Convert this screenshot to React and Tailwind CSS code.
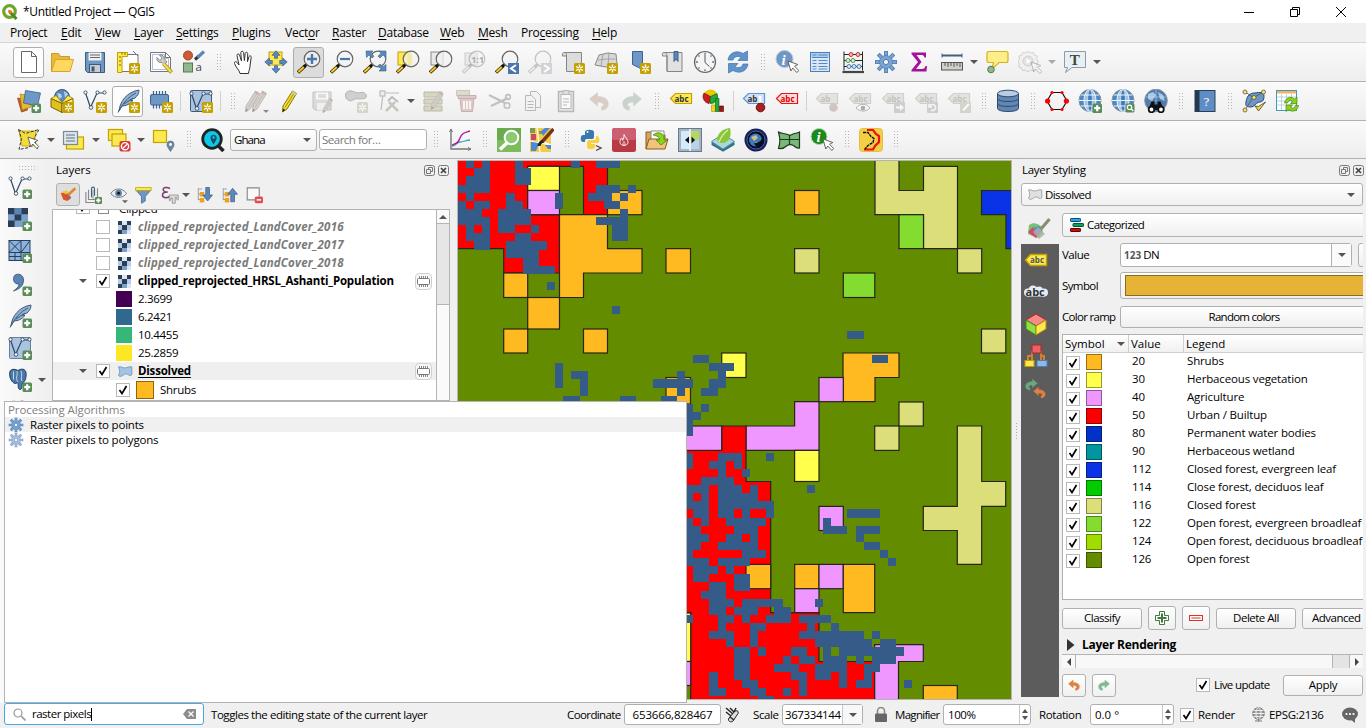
import React from "react";

/* ---------- shared icon pieces ---------- */
const I = ({ children, className = "h-6 w-6" }) => (
  <svg viewBox="0 0 24 24" className={"shrink-0 " + className} fill="none">{children}</svg>
);
const Star = ({ c = "#c4a000" }) => (
  <g>
    <rect x="13" y="13" width="11" height="11" rx="1.500" fill={c} />
    <path d="M18.500 14.500v8M15 16.500l7 4M22 16.500l-7 4" stroke="#fff" strokeWidth="1.400" />
    <circle cx="18.500" cy="18.500" r="1" fill={c} />
  </g>
);
const Plus = () => (
  <g>
    <rect x="14.500" y="14.500" width="9.500" height="9.500" rx="1.500" fill="#5a8c5a" />
    <path d="M19.200 16.200v6M16.200 19.200h6" stroke="#fff" strokeWidth="2.200" />
  </g>
);
const Lens = ({ sign, pale }) => (
  <g opacity={pale ? 0.45 : 1}>
    <path d="M8.500 15.500L1 22.500" stroke={pale ? "#888" : "#3a3000"} strokeWidth="3.400" />
    <path d="M6.800 17L1.400 22.100" stroke={pale ? "#ddd" : "#f6c52c"} strokeWidth="2" />
    <path d="M10.400 13.600L7 16.800" stroke={pale ? "#888" : "#111"} strokeWidth="2.600" />
    <circle cx="15" cy="9" r="7.800" fill="#f3f3f3" fillOpacity=".75" stroke={pale ? "#888" : "#666"} strokeWidth="1.200" />
    {sign}
  </g>
);
const Cursor = ({ x = 12, y = 11 }) => (
  <path transform={`translate(${x} ${y})`} d="M0 0l2.800 10 2-3 4 4.500 2-2-4.300-4.200 3.300-1.800z" fill="#fff" stroke="#555" strokeWidth=".9" />
);
const Abc = ({ fill, stroke, text = "#333", label = "abc", pale, children }) => (
  <I>
    <g opacity={pale ? 0.4 : 1}>
      <path d="M1.500 9.500L6.500 4.500h16v10h-16z" fill={fill} stroke={stroke} strokeWidth="1.200" />
      <text x="5.500" y="12.500" fontSize="8" fontWeight="700" fontFamily="Open Sans, sans-serif" fill={text}>{label}</text>
      {children}
    </g>
  </I>
);
const Quill = ({ dark }) => (
  <g>
    <path d="M3 22C4 12 11 3 23 1c0 4-2 6-4 8l-5 2 3 .5c-3 3.500-7 5.500-11 5.500z" fill="#8db2d8" stroke="#415a75" strokeWidth="1" />
    <path d="M2 23.500C7 14 12 8 20 4M8 15l9-6" stroke={dark ? "#2f465e" : "#415a75"} strokeWidth="1" />
  </g>
);
const Vee = () => (
  <g stroke="#2f4b66" strokeWidth="1.200">
    <path d="M2.500 4l5 14.500L14 4h7" />
    <g fill="#fff" strokeWidth=".9">
      <circle cx="2.500" cy="3.500" r="1.600" /><circle cx="8" cy="18.500" r="1.800" /><circle cx="14.500" cy="3.500" r="1.600" /><circle cx="21.500" cy="3.500" r="1.600" />
    </g>
  </g>
);
const Globe = ({ children }) => (
  <I>
    <circle cx="12" cy="11.500" r="11" fill="#4f88c0" stroke="#8a949e" strokeWidth="1" />
    <ellipse cx="12" cy="11.500" rx="6" ry="11" fill="#9cc4e8" stroke="#eef4fa" strokeWidth="1" />
    <ellipse cx="12" cy="11.500" rx="2.400" ry="11" fill="#3f7cb8" stroke="#eef4fa" strokeWidth=".6" />
    <path d="M1 11.500h22M3 6h18M3 17h18" stroke="#eef4fa" strokeWidth="1" />
    {children}
  </I>
);
const Gear = ({ fill = "#7ba3d0", stroke = "#4d7fb8" }) => (
  <g>
    <g stroke={stroke} strokeWidth="4"><path d="M12 1v22M1 12h22M4.200 4.200l15.600 15.600M19.800 4.200L4.200 19.800" /></g>
    <g stroke={fill} strokeWidth="2.400"><path d="M12 1.800v20.400M1.800 12h20.400M4.800 4.800l14.400 14.400M19.200 4.800L4.800 19.200" /></g>
    <circle cx="12" cy="12" r="6.500" fill={fill} stroke={stroke} strokeWidth=".7" />
    <circle cx="12" cy="12" r="2.600" fill="#f4f4f4" stroke={stroke} />
  </g>
);
const Pencil = ({ pale, dx = 0 }) => (
  <g transform={`translate(${dx} 0)`}>
    <path d="M5 17L14.500 2l4 2.500L9 20l-4.500 3z" fill={pale ? "#d5d1cb" : "#f0dc3c"} stroke={pale ? "#bdb9b4" : "#8a7600"} strokeWidth="1" />
    <path d="M7 18.500l9.500-15" stroke={pale ? "#c0bbb5" : "#a89000"} strokeWidth="1" />
    <path d="M14.500 2l4 2.500-1 1.700-4-2.600z" fill={pale ? "#cfaeae" : "#c9c9c9"} />
    <path d="M5.200 19.500L4.500 23l2.800-2z" fill={pale ? "#999" : "#222"} />
  </g>
);
const Undo = ({ c, flip }) => (
  <path transform={flip ? "translate(24 0) scale(-1 1)" : undefined} d="M2.500 10l8-6.500v4c8 0 12 4 10.500 9-1 3-3 4.500-6.500 4.500v-3.500c3.500 0 3-4.500-4-4.500v4z" fill={c} stroke={c} strokeWidth=".6" />
);
const Poly = ({ fill, stroke }) => (
  <path d="M2 3c4-1.500 6 2 10 1.500S18 2 22.500 3v12c-2.500 2.500-4 .5-6.500-.5s-4-1-6.500 1-5.500 3-7.500.5c2.500-4 2.500-8 0-13z" fill={fill} stroke={stroke} strokeWidth="1.300" />
);
const Cells = () => (
  <g>
    <rect width="20" height="19" y="1" x="0" fill="#7ba0cc" />
    <path d="M0 1h6.600v6.300H0zM13.300 1h6.700v6.300h-6.700zM6.600 7.300h6.700v6.300H6.600zM0 13.600h6.600V20H0z" fill="#2b3e55" />
    <path d="M6.600 1h6.700v6.300H6.600z" fill="#5b83b4" />
  </g>
);

const icons = {
  newp: <I><path d="M4.500 1.500h10l5 5v16h-15z" fill="#fff" stroke="#666" /><path d="M14.500 1.500v5h5" stroke="#666" /></I>,
  open: <I><path d="M1.500 21.500v-18h7l2 3h9v4" fill="#e8b93a" stroke="#c99b2a" /><path d="M1.500 21.500l4-12h18l-3.500 12z" fill="#ffd75e" stroke="#d5a62f" /></I>,
  save: <I><path d="M2.500 2.500h19v20h-17l-2-2z" fill="#6d97c4" stroke="#415a75" /><rect x="5.500" y="2.500" width="13" height="8" fill="#f0f0f0" /><path d="M7 5h10M7 7.500h10" stroke="#666" /><rect x="6.500" y="14.500" width="11" height="8" fill="#c8ccd0" stroke="#415a75" /><rect x="8.500" y="16.500" width="3" height="5" fill="#415a75" /></I>,
  layout: <I><path d="M5 4.500h17v17H5z" fill="#fff" stroke="#777" /><path d="M1.500 22.500V2.500h10v4h-5.500v16z" fill="#fce94f" stroke="#c4a000" /><path d="M6 2.500v2M3 7h2M3 11h2M3 15h2M9 3v2" stroke="#7a6500" /><path d="M17 1l5 5" stroke="#777" /><Star /></I>,
  mgr: <I><path d="M1.500 2.500h15l5 5v14h-20z" fill="#fff" stroke="#777" /><path d="M16.500 2.500v5h5" stroke="#777" /><path d="M3.500 4.500h12v4h4v11h-16z" stroke="#a9c0e6" /><path d="M8 7.500a4 4 0 0 0 5 5l2 2 3-2.500-2.500-3a4 4 0 0 0-5-4l2.500 3-2 2.500z" fill="#ccc" stroke="#777" strokeWidth=".8" /><path d="M14.500 13.500l8 9" stroke="#b39600" strokeWidth="4" /><path d="M14.500 13.500l7.500 8.500" stroke="#f6dc6c" strokeWidth="2" /></I>,
  style: <I><circle cx="6" cy="5.500" r="4.500" fill="#cc5c35" stroke="#a84020" /><path d="M13 9.500l4-3.500" stroke="#333" strokeWidth="3" /><path d="M15.500 7.500l6.500-6" stroke="#5b87bd" strokeWidth="3.200" /><rect x="1.500" y="13" width="9" height="9" fill="#8fb88f" stroke="#527a52" /><text x="13.500" y="20.500" fontSize="11.500" fontFamily="Open Sans, sans-serif" fill="#444">a</text></I>,
  hand: <I><path d="M9 23.500C8.500 20 5 18 3.500 13.500c-.5-2 1.500-2.500 3-.5L8 15 6 5.500C6 3.500 8 3.500 8.500 5L10.500 11 9.800 2.500c.3-1.700 2.400-1.600 2.800 0l.8 8L14.200 3.200c.6-1.500 2.400-1.200 2.500.4l-.2 8 1.500-5c.8-1.400 2.400-.8 2.200.8L19 16c0 3-1.500 5-1.500 7.500z" fill="#fff" stroke="#333" strokeWidth="1" /></I>,
  panmap: <I><rect x="5" y="2" width="13" height="13" fill="#fce94f" stroke="#c4a000" /><g fill="#5b87bd" stroke="#3c618c" strokeWidth=".7"><path d="M12 .8l4 4.500h-2.500v3h-3v-3H8zM12 23.200l4-4.500h-2.500v-3h-3v3H8zM.8 12l4.500-4v2.500h3v3h-3V16zM23.200 12l-4.500-4v2.500h-3v3h3V16z" /></g></I>,
  zin: <I><Lens sign={<path d="M15 4v10M10 9h10" stroke="#4a76ad" strokeWidth="2.400" />} /></I>,
  zout: <I><Lens sign={<path d="M10 9h10" stroke="#4a76ad" strokeWidth="2.200" />} /></I>,
  zfull: <I><Lens /><g fill="#5b87bd" stroke="#3c618c" strokeWidth=".6"><path d="M3 1h7L8 3.200l3 3L9 8 6 5 3.500 7.500zM23 1h-7l2 2.200-3 3L17 8l3-3 3 2.500zM23 21h-7l2-2.200-3-3 2-1.800 3 3 3-2.500z" /></g></I>,
  zsel: <I><rect x="2" y="2" width="12" height="13" fill="#fce94f" stroke="#c4a000" /><Lens /><path d="M12 3.500h4v11c-3 0-5-2-5-5z" fill="#f5ea86" opacity=".7" /></I>,
  zlay: <I><rect x="2" y="2" width="12" height="13" fill="#e9e9e9" stroke="#8a8a8a" /><Lens /></I>,
  z11: <I><rect x="3" y="3" width="12" height="12" fill="#e9e9e9" stroke="#ccc" /><Lens pale /><text x="9.200" y="12.500" fontSize="9" fontWeight="700" fontFamily="Open Sans, sans-serif" fill="#aaa">1:1</text></I>,
  zprev: <I><Lens /><rect x="13" y="13" width="11" height="11" fill="#4a76ad" /><path d="M21 15l-5 3.500 5 3.500" stroke="#fff" strokeWidth="2" /></I>,
  znext: <I><Lens pale /><rect x="13" y="13" width="11" height="11" fill="#d0d4d8" /><path d="M16 15l5 3.500-5 3.500" stroke="#fff" strokeWidth="2" /></I>,
  map2: <I><path d="M3.500 2.500h17v19H5.500V6H1.500C1 3 2 2.500 3.500 2.500z" fill="#dcdcdc" stroke="#858585" /><path d="M3.500 2.500c1.500 0 2 1 2 3.500" stroke="#858585" /><Star /></I>,
  map3: <I><path d="M1 15L5 5l9-2 8 1 1 10-11 3z" fill="#d8d8d8" stroke="#8a8a8a" /><path d="M3.500 10l9-1 9 0M9 4l-2 12M15 3l-1 13" stroke="#999" strokeWidth=".8" /><Star /></I>,
  bmk: <I><path d="M5.500 1.500h10v18l-4-2-6-3z" fill="#6d97c4" stroke="#41618a" /><Star /></I>,
  bmks: <I><path d="M4 2.500h18v19H7V6H2.500C2 3 2.500 2.500 4 2.500z" fill="#e2e2e2" stroke="#858585" /><path d="M4 2.500c2 0 3 1 3 3.500v15" stroke="#858585" /><path d="M14 1.500h4v10l-2-2.500-2 2.500z" fill="#5b87bd" stroke="#3c618c" /></I>,
  clock: <I><circle cx="12" cy="12" r="10.500" fill="#f4f4f4" stroke="#666" strokeWidth="1.200" /><path d="M12 5v7.500l4.500 4" stroke="#555" /><path d="M12 2.800v2M12 19.200v2M2.800 12h2M19.200 12h2M5.500 5.500l1 1M18.500 5.500l-1 1M5.500 18.500l1-1M18.500 18.500l-1-1" stroke="#4a6f9a" strokeWidth="1.300" /></I>,
  refresh: <I><path d="M2 10C3 3 10-.5 17 3.500L21.500 1v9.500H12l3-3.200c-4-2-7-.5-8 2.700z" fill="#5f93cc" stroke="#3f72ad" strokeWidth=".7" /><path d="M22 14c-1 7-8 10.500-15 6.500L2.500 23v-9.500H12l-3 3.200c4 2 7 .5 8-2.700z" fill="#5f93cc" stroke="#3f72ad" strokeWidth=".7" /></I>,
  ident: <I><circle cx="9.500" cy="9" r="8.500" fill="#6d97c4" stroke="#b5c8dd" /><text x="6.500" y="14.500" fontSize="15" fontStyle="italic" fontWeight="700" fontFamily="Liberation Serif, serif" fill="#fff">i</text><Cursor x={13} y={11} /></I>,
  table: <I><rect x="2.500" y="2.500" width="19" height="19" fill="#d9e8f7" stroke="#4b7fb8" /><rect x="3" y="3" width="18" height="4" fill="#a9cdf0" /><path d="M4 7.500h16M4.500 5h4M10.500 5h9" stroke="#5b87bd" /><path d="M4.500 10.500h4M10.500 10.500h9M4.500 13.500h4M10.500 13.500h9M4.500 16.500h4M10.500 16.500h9M4.500 19h4M10.500 19h9" stroke="#5b87bd" strokeWidth="1.200" /></I>,
  abacus: <I><path d="M3 1.500v19M21.500 1.500v19M3 4.500h18.500M3 10.500h18.500M3 16.500h18.500" stroke="#222" /><path d="M1.500 22h21.500" stroke="#444" strokeWidth="2.200" /><g fill="#ffb5b5" stroke="#b33"><circle cx="10" cy="4.500" r="2" /><circle cx="17" cy="4.500" r="2" /></g><g fill="#d5f5d5" stroke="#5a8c5a"><circle cx="7" cy="10.500" r="2" /><circle cx="12" cy="10.500" r="2" /></g><g fill="#d5e5f5" stroke="#4b7fb8"><circle cx="8" cy="16.500" r="2" /><circle cx="13" cy="16.500" r="2" /><circle cx="18" cy="16.500" r="2" /></g></I>,
  gear: <I><Gear /></I>,
  sigma: <I><path d="M4.500 2.500h14.500v5h-1.500c-.5-2-1.500-2.500-3.500-2.500H9.500l5 7-5.500 7h6c2 0 3-1 3.500-3H20l-.5 5.500H4.500V20L11 12 4.500 4z" fill="#a3119d" /></I>,
  ruler: <I><path d="M2 5.500h20" stroke="#3f5f80" strokeWidth="2" /><path d="M2 3.500v4M22 3.500v4" stroke="#3f5f80" /><rect x="1.500" y="12.500" width="21" height="7.500" fill="#d0d0cc" stroke="#555" /><path d="M5 13v3M8 13v4M11 13v3M14 13v4M17 13v3M20 13v4" stroke="#555" /></I>,
  tip: <I><path d="M4 1.500h17q2 0 2 2v7q0 2-2 2h-7L7 19l1.500-6.500H4q-2 0-2-2v-7q0-2 2-2z" fill="#fdee8c" stroke="#d5b21a" strokeWidth="1.200" /><circle cx="6" cy="19.500" r="3.300" fill="#8fb88f" stroke="#527a52" /></I>,
  action: <I><g opacity=".4" stroke="#999"><path d="M10 1.500l2.500 1.500 3-.5 1 2.700 2.700 1-.5 3 1.500 2.300-1.500 2.500.5 3-2.700 1-1 2.700-3-.5-2.500 1.500-2.500-1.500-3 .5-1-2.700-2.700-1 .5-3L0 11.500l1.500-2.300-.5-3 2.700-1 1-2.700 3 .5z" fill="#ececec" /><circle cx="10" cy="11" r="5" fill="#ccc" /></g><path d="M8.500 8.500l4.500 2.700-4.500 2.700z" fill="#fff" /><g opacity=".4"><Cursor x={13} y={12} /></g></I>,
  textn: <I><path d="M1.500 1.500h21v16H9L2.500 22.500l2-5h-3z" fill="#e9f0f5" stroke="#8c9ba6" /><text x="6.800" y="14.500" fontSize="15" fontWeight="700" fontFamily="Liberation Serif, serif" fill="#444">T</text></I>,
  dsm: <I><path d="M.5 9l9 2 1 10-6 2z" fill="#c95a2a" stroke="#8c3b16" strokeWidth=".7" /><path d="M3 5l11 2v11l-9 3z" fill="#e9b92c" stroke="#a88112" strokeWidth=".7" /><path d="M8.500 1.500L23.500 4l-3 13L6.500 14z" fill="#6d97c4" stroke="#3c618c" strokeWidth=".8" /><Plus /></I>,
  geopkg: <I><circle cx="12" cy="8" r="7.500" fill="#5b87bd" stroke="#30557f" /><path d="M7 4l4 1 1 3-3 2zM14 2l4 3-3 4z" fill="#b8d2ea" /><path d="M1 9.500l5-3 6 7 6-7 5 3-11 5z" fill="#fce94f" stroke="#8a7000" strokeWidth=".7" /><path d="M1 9.500l11 5v9L1 18z" fill="#e0c21c" stroke="#6b5600" strokeWidth=".9" /><path d="M23 9.500l-11 5v9L23 18z" fill="#fff176" stroke="#6b5600" strokeWidth=".9" /><Star /></I>,
  vnew: <I><Vee /><Star /></I>,
  quill: <I><Quill /><Star /></I>,
  chip: <I><path d="M4.500 2v17.500M7.500 2v17.500M10.500 2v17.500M13.500 2v17.500M16.500 2v17.500" stroke="#3c618c" strokeWidth="1.200" /><rect x="1.500" y="5.500" width="18" height="10.500" rx="1.500" fill="#6d97c4" stroke="#3c618c" /><Star /></I>,
  virt: <I><rect x="1.500" y="1.500" width="21" height="21" rx="1" fill="#a9c3e0" stroke="#415a75" /><g transform="translate(0 1)"><Vee /></g><Star /></I>,
  pen2: <I><Pencil pale dx={-4} /><Pencil pale dx={3} /><path d="M18 21h6l-3 3z" fill="#888" /></I>,
  pen: <I><Pencil /></I>,
  psave: <I><g opacity=".55"><path d="M2 3h18v18H4l-2-2z" fill="#c8c8c8" stroke="#999" /><rect x="5" y="3.500" width="12" height="7" fill="#fafafa" /><path d="M7 6h8M7 8h8" stroke="#999" /><rect x="6" y="14" width="9" height="7" fill="#eee" /></g><g transform="translate(9 8) scale(.68)"><Pencil pale /></g></I>,
  padd: <I><path d="M1.500 6c0-4 5-5 8-3.500S15 4 18 3.500s5.500 3 4 5-9 1-11 1.500-3 3-6 1.500-3.500-2.500-3.500-5.500z" fill="#cfd0cc" stroke="#b5b6b2" /><g opacity=".8"><Star c="#cfcdc2" /></g></I>,
  vert: <I><g stroke="#bbb" strokeWidth="1.200"><path d="M4 21L6 5M9 4h13" /><rect x="3" y="2" width="5" height="5" fill="#eee" /><path d="M9 22l9-9M12 13l9 9" strokeWidth="2.500" stroke="#c8c5be" /><path d="M11 12l4-4 6 5" strokeWidth="2" /></g></I>,
  multi: <I><g fill="#d8d6c2" stroke="#bbb9a8"><path d="M2 3h18v5H2zM2 10h18v5H2zM2 17h18v5H2z" /></g><g transform="translate(2 1) scale(.85)"><Pencil pale dx={4} /></g></I>,
  trash: <I><path d="M1.500 1.500h13v5h-13z" fill="#dddbd0" stroke="#c9c7bb" /><path d="M3 6.500h18v3H3zM5 9.500h14l-1.500 13h-11z" fill="#dfcaca" stroke="#c5b0b0" /><path d="M9 12v8M12 12v8M15 12v8" stroke="#fff" strokeWidth="1.500" /></I>,
  cut: <I><g stroke="#c0c0c0"><path d="M1 6l16 8M3 17L20 9" strokeWidth="2.200" /><circle cx="19" cy="16.500" r="2.800" strokeWidth="1.600" /><circle cx="20" cy="8" r="2.400" strokeWidth="1.600" /></g></I>,
  copy: <I><g fill="#f2f2f2" stroke="#b8b8b8"><path d="M9.500 2.500h6l4 4v12h-10z" /><path d="M4.500 6.500h6l4 4v11h-10z" /><path d="M6.500 12.500h6M6.500 15.500h6M6.500 18.500h6" /></g></I>,
  paste: <I><g stroke="#b8b8b8"><rect x="4.500" y="2.500" width="15" height="20" fill="#e4e4e4" strokeWidth="1.500" /><rect x="7" y="5.500" width="10" height="14" fill="#fafafa" /><path d="M9 1.500h6v4H9z" fill="#ddd" /><path d="M9 10h6M9 13h6M9 16h4" /></g></I>,
  undo: <I><Undo c="#d9cdc6" /></I>,
  redo: <I><Undo c="#c9d2cb" flip /></I>,
  abcY: <Abc fill="#fce94f" stroke="#c4a000" />,
  diag: <I><circle cx="8.500" cy="7.500" r="7" fill="#e6c700" /><path d="M8.500 7.500L2 4a7 7 0 0 0 5 10.500z" fill="#c81e1e" stroke="#700" strokeWidth=".6" /><path d="M8.500 7.500l6.500-3a7 7 0 0 1-7 10z" fill="#23a83a" stroke="#0a5a18" strokeWidth=".6" /><path d="M9.500 16h4v6.500h-4z" fill="#f2d60c" stroke="#a89000" strokeWidth=".6" /><path d="M13.500 9.500h3.500v13h-3.500z" fill="#23a83a" stroke="#0a5a18" strokeWidth=".6" /><path d="M17.500 17h4v5.500h-4z" fill="#a01515" stroke="#500" strokeWidth=".6" /></I>,
  abcB: <Abc fill="#cfe2f8" stroke="#5b95d8" label="ab"><path d="M18 14V7" stroke="#fff" strokeWidth="2.500" /><circle cx="18.500" cy="18.500" r="4.300" fill="#a52020" stroke="#7c1010" /></Abc>,
  abcR: <Abc fill="#fdd" stroke="#e11" text="#d00" />,
  g1: <Abc pale fill="#ccc9b8" stroke="#999" text="#777" label="ab"><circle cx="18.500" cy="18.500" r="4.300" fill="#a08080" /></Abc>,
  g2: <Abc pale fill="#ccc9b8" stroke="#999" text="#777"><path d="M8 19c4-5 10-5 14 0-4 4-10 4-14 0z" fill="#fff" stroke="#555" /><circle cx="15" cy="19" r="2.300" fill="#444" /></Abc>,
  g3: <Abc pale fill="#ccc9b8" stroke="#999" text="#777"><rect x="13" y="13" width="11" height="11" rx="1" fill="#999" /><path d="M15 17.500h4V15l4 3.500-4 3.500v-2.500h-4z" fill="#fff" /></Abc>,
  g4: <Abc pale fill="#ccc9b8" stroke="#999" text="#777"><rect x="13" y="13" width="11" height="11" rx="1" fill="#999" /><path d="M16 17a3 3 0 1 1 1 4M15 15v3h3" stroke="#fff" strokeWidth="1.500" /></Abc>,
  g5: <Abc pale fill="#ccc9b8" stroke="#999" text="#777"><rect x="13" y="13" width="11" height="11" rx="1" fill="#a8a694" /><path d="M16 21.500l6-6.500" stroke="#fff" strokeWidth="2.200" /></Abc>,
  db: <I><path d="M1.500 4.500v15c0 4 21 4 21 0v-15" fill="#6286b4" stroke="#2f4b6c" /><path d="M1.500 9.500c0 4 21 4 21 0M1.500 14.500c0 4 21 4 21 0" stroke="#2f4b6c" /><ellipse cx="12" cy="4.500" rx="10.500" ry="3.300" fill="#b9cde4" stroke="#2f4b6c" /></I>,
  hex: <I><path d="M2 12L7 3.500h10L22 12l-5 8.500H7z" stroke="#111" strokeWidth="1.200" /><g fill="#f00"><circle cx="2.600" cy="12" r="2.600" /><circle cx="21.400" cy="12" r="2.600" /><circle cx="7" cy="3.500" r="1.600" /><circle cx="17" cy="3.500" r="1.600" /><circle cx="7" cy="20.500" r="1.600" /><circle cx="17" cy="20.500" r="1.600" /></g></I>,
  gl1: <Globe><Plus /></Globe>,
  gl2: <Globe><rect x="14.500" y="14.500" width="9" height="9" rx="1.500" fill="#5a8c5a" /><circle cx="18.500" cy="18.300" r="2.200" stroke="#fff" strokeWidth="1.200" /><path d="M20.300 20l2 2" stroke="#fff" strokeWidth="1.300" /></Globe>,
  gl3: <I><circle cx="12" cy="11.500" r="11.300" fill="#4f7cb0" stroke="#8a949e" /><path d="M4 5l5-2 3 3-4 6-4-2zM14 3l5 3 2 6-5-2z" fill="#a9c8e6" /><path d="M2 8h20M12 1v12" stroke="#dfeaf5" strokeWidth=".5" /><path d="M4.500 20l3-7.500h3v3h3v-3h3l3 7.500-4 1h-7z" fill="#111" /><circle cx="7.500" cy="20.500" r="2.800" fill="#fff" stroke="#111" strokeWidth="1.800" /><circle cx="17" cy="20.500" r="2.800" fill="#fff" stroke="#111" strokeWidth="1.800" /></I>,
  help: <I><rect x="2" y="1.500" width="20" height="21" fill="#5f8cc4" stroke="#2b3e55" /><rect x="2" y="1.500" width="4.500" height="21" fill="#26384d" /><text x="10.500" y="17" fontSize="13" fontFamily="Liberation Serif, serif" fill="#fff">?</text></I>,
  topo: <I><path d="M4 13c1-7 4-9 9-9 5-1 9-1 9 3 0 5-2 6-5 6-4 1-4 5-8 5s-6-1-5-5z" fill="#6d97c4" stroke="#2f4b6c" /><path d="M2.500 2.500l9 6 11-6M11 8.500L3 21" stroke="#555" strokeWidth=".8" /><g fill="#fce94f" stroke="#555" strokeWidth=".8"><circle cx="3" cy="3" r="2" /><circle cx="21.500" cy="3" r="2" /><circle cx="12" cy="8.500" r="2" /><circle cx="3" cy="21" r="2" /></g><path d="M13 17l3.500 5L23.500 13l-7 4.500z" fill="#f6d42c" stroke="#444" strokeWidth=".8" /></I>,
  sheet: <I><rect x="1.500" y="1.500" width="20" height="20" fill="#fff" stroke="#3b9cc0" /><rect x="2" y="2" width="19" height="2.500" fill="#f6b25c" /><path d="M2 8h19M2 12h19M2 16h19M6.500 5v16M11.500 5v16M16.500 5v16" stroke="#a9c8d8" strokeWidth=".8" /><path d="M9.500 14c1-6 7-7 10-4l2.500-2v6.500h-6.500l2-2c-2-2-4-1-5 1.500zM23.500 16.500c-1 6-7 7-10 4l-2.500 2V16h6.500l-2 2c2 2 4 1 5-1.500z" fill="#8ad120" stroke="#4a8a08" strokeWidth=".7" /></I>,
  sel1: <I><path d="M2 3h17l-2 15H5z" fill="#f2dc3c" stroke="#c4a000" strokeWidth=".8" /><path d="M1.500 1.500l7 4 13.500-4-5 9 4 12M1.500 1.500l3 9-2.500 11 10-2 2-3" stroke="#333" strokeDasharray="3 1.500" /><Cursor x={11} y={9} /></I>,
  sel2: <I><rect x="4.500" y="9" width="17" height="12" fill="#fce94f" stroke="#c4a000" strokeWidth="1.200" /><rect x="1.500" y="3.500" width="14" height="13" fill="#dde5ee" stroke="#7c8894" strokeWidth="1.200" /><path d="M4 7h9M4 10h9M4 13h9" stroke="#8a97a5" strokeWidth="1.400" /></I>,
  sel3: <I><rect x="1.500" y="1.500" width="14" height="11" fill="#fce94f" stroke="#c4a000" strokeWidth="1.200" /><rect x="5" y="6" width="14" height="12" fill="#fce94f" stroke="#c4a000" strokeWidth="1.200" /><rect x="12.500" y="13" width="11" height="10.500" rx="2" fill="#d83a3a" /><circle cx="18" cy="18.200" r="3.600" stroke="#fff" strokeWidth="1.400" /><path d="M15.500 20.800l5-5" stroke="#fff" strokeWidth="1.300" /></I>,
  sel4: <I><rect x="1.500" y="2.500" width="13" height="12" fill="#fce94f" stroke="#c4a000" strokeWidth="1.200" /><path d="M18.500 23.500c-3-4.500-3.500-5-3.500-7a3.500 3.500 0 0 1 7 0c0 2-.5 2.500-3.500 7z" fill="#6a89a5" stroke="#4a6a86" strokeWidth=".6" /><circle cx="18.500" cy="16.500" r="1.400" fill="#fff" /></I>,
  find: <I><path d="M17.500 18l5 5" stroke="#222" strokeWidth="3.600" /><circle cx="11" cy="11" r="9.300" fill="#0fc8e8" stroke="#222" strokeWidth="2.800" /><path d="M12.500 16.500c-2.600-4.500-3-5.500-3-7a3.200 3.200 0 0 1 6.300 0c0 2-.8 3-3.300 7z" fill="#14506c" /><circle cx="12.600" cy="9.500" r="1.200" fill="#0fc8e8" /></I>,
  plot: <I><path d="M3 1v20h20" stroke="#777" strokeWidth="1.400" /><path d="M1.500 4L3 1l1.500 3M20 19.500l3 1.500-3 1.500" stroke="#777" /><path d="M4 18c5 0 4-4 8-4s6-2 10-2" stroke="#3aa5b5" strokeWidth="1.300" /><path d="M4 17c5-2 6-2 8-7s4-5 10-7" stroke="#b0189a" strokeWidth="1.400" /></I>,
  greenS: <I><rect width="24" height="24" fill="#7cbc5e" /><rect width="24" height="12" fill="#6bab50" /><path d="M11 14l-8 7.500" stroke="#fff" strokeWidth="3.500" /><circle cx="14.500" cy="9.500" r="6.800" fill="#8dc873" stroke="#fff" strokeWidth="2" /></I>,
  osm: <I><rect x="0" y="0" width="21" height="24" fill="#f4cc4a" /><path d="M0 0h5v5H0zM9 3h4v3H9z" fill="#7a9a5a" /><path d="M1 6h5v6H1z" fill="#c84a6a" /><path d="M11 3l4-3h5l-7 8zM1 14c4-2 6 0 8 2l-3 7H1z" fill="#4a88d8" /><path d="M0 13l21 4M7 0l3 24M14 14l7 3" stroke="#fff" strokeWidth="1.200" /><path d="M12 14L23.500 1" stroke="#7a3414" strokeWidth="3.500" /><path d="M9 18c0-3 2-4 4-5" stroke="#222" strokeWidth="3" /><path d="M15 17h6v4h-3z" fill="#4a88d8" /></I>,
  py: <I><path d="M6 7V4c0-3 9-3 9 0v5c0 2-1 2-3 2H8c-2 0-2 1-2 3H4c-3 0-3-7 0-7h7z" fill="#3b78ab" /><path d="M17 8h1c3 0 3 7 1 7h-7v1h4v3c0 3-8 3-8 0v-4c0-2 1-3 3-3h4c2 0 2-1 2-4z" fill="#f8d13d" /><circle cx="8.500" cy="4" r="1" fill="#fff" /><path d="M17 17.500l5 2.500-5 2.500" stroke="#444" strokeWidth="1.300" /></I>,
  fire: <I><rect width="24" height="24" rx="2.500" fill="#b83a44" /><rect width="24" height="12" rx="2.500" fill="#cd6070" /><path d="M12 6.500c.5 2.500 4.500 5 4 8-.7 4-7.300 4-8 0-.4-2 1-3.500 1.500-4.500 1 1 1 1.500 1 2.500 1-1.500 1.500-3.500 1.500-6z" stroke="#fff" strokeWidth=".9" /><path d="M12 17.500c-2-1.500-.5-3 0-4 .8 1 2 2.500 0 4z" stroke="#fff" strokeWidth=".8" /></I>,
  folder: <I><path d="M1 21V4h7l2 3h10v3" fill="#d9a35c" stroke="#8a5a1c" /><path d="M6 3h13v9H6z" fill="#fff" stroke="#888" /><path d="M1 21L4 11h19l-3 10z" fill="#f0c47a" stroke="#8a5a1c" /><path d="M8 7c6-5 12-1 11 5h3.500L16 17l-5-5h3.500c0-3-2-4-6.500-5z" fill="#8ad120" stroke="#4a8a08" strokeWidth=".8" /></I>,
  swipe: <I><rect x=".5" y=".5" width="23" height="23" fill="#a5b5c5" stroke="#6a7a8a" /><rect x="3" y="3" width="8.500" height="18" fill="#d5ebfb" /><rect x="12.500" y="3" width="8.500" height="9" fill="#b5d860" /><rect x="12.500" y="12" width="8.500" height="9" fill="#b9d4ea" /><path d="M12 1v22" stroke="#fff" strokeWidth="1.500" /><path d="M11 8.500v7L7 12zM13.500 8.500v7l3.500-3.500z" fill="#111" /></I>,
  leaf: <I><path d="M.5 14.500L12 7l11.500 7.500V17L12 23.800.5 17z" fill="#39708a" /><path d="M.5 13.500L12 6l11.500 7.500L12 21z" fill="#a9d8d8" stroke="#4b93a8" /><path d="M6 11C7 5 11 1 19 0c2 8-1 15-8 15-3 0-4.500-1-5-4z" fill="#8bc63a" /><path d="M8 14C10 9 13 5 17 2" stroke="#d8f0b0" strokeWidth="1.200" /></I>,
  earth: <I><circle cx="12" cy="12" r="11.500" fill="#17205a" /><circle cx="12" cy="12" r="9" fill="#060c20" stroke="#4a5fa8" strokeWidth="1" /><circle cx="11.500" cy="12" r="6.500" fill="#3c7ab8" /><path d="M7 9l5-2 2 3-4 3zM11 14l4 0-2 4z" fill="#c9c08a" /><path d="M12 18.500c5 0 7-4 6-9 0 4-5 5-8 6z" fill="#081028" /></I>,
  gpoly: <I><path d="M1.500 4c3 2 6 1 9 2.500 2 1 3 1 4.500 0 3-1.500 5-1 7.500-2.500v16c-3 1-4-1-6-2.500-2-1-5-1-7 .5-2 2-5 3-8 2.500 2-6 2-10 0-16z" fill="#7ab87a" stroke="#1d3a1d" strokeWidth="1.200" /><path d="M3 11.500h19.500M12.500 7v10" stroke="#1d3a1d" strokeWidth="1.200" /></I>,
  gi: <I><circle cx="9" cy="8.500" r="8" fill="#1a8a1a" stroke="#b5d8b5" /><text x="6.500" y="14" fontSize="15" fontStyle="italic" fontWeight="700" fontFamily="Liberation Serif, serif" fill="#fff">i</text><Cursor x={13} y={11} /></I>,
  route: <I><rect x=".5" y=".5" width="23" height="23" rx="3" fill="#f2cf45" stroke="#e5c040" /><path d="M8 2h6l3 4 3 2v6l-4 4-2 3.500H5" stroke="#f01010" strokeWidth="2.200" /><path d="M4 4.500h5l3 4 3 2-1 4-5 3-3 3.500" stroke="#111" strokeDasharray="3 .7" strokeWidth="1.400" /></I>,
  lraster: <I><Cells /><Plus /></I>,
  lmesh: <I><rect x="1" y="1.500" width="21" height="20" fill="#8db2dc" stroke="#26405e" /><path d="M1 1.500l12 12 9-12M13 1.500L1 13.500M13 1.500v20M1 13.500h21M7 13.500v8M1 17.500h12" stroke="#26405e" /><Plus /></I>,
  lcomma: <I><path d="M5.500 6.500c0-6 10-6 10 1.500 0 6-4 9-10 11 4-3 5.500-5 5.500-7-4 0-5.500-2-5.500-5.500z" fill="#5b83b4" stroke="#2f4b6c" strokeWidth=".8" /><Plus /></I>,
  lquill: <I><Quill /><Plus /></I>,
  lvirt: <I><rect x="1.500" y="1.500" width="21" height="21" rx="1" fill="#a9c3e0" stroke="#6a8099" /><Vee /><Plus /></I>,
  lvec: <I><Vee /><Plus /></I>,
  pg: <I><path d="M2 9c-2-8 3-9 8-6.500C15-.5 19 1.500 18 8c0 3-1.500 6-3.500 7-1 3 .5 6-2.500 6.500-3-1-1-5-2.500-7-3 3-7-2-7.500-5.500z" fill="#4a78a8" stroke="#1f3e60" /><path d="M5.500 3.500v8M9 3c1 4-2 8 1 11M13 3c2 3-1 8 1 10" stroke="#c5d8ea" strokeWidth="1" /><Plus /></I>,
};

/* ---------- small building blocks ---------- */
const Grip = () => (
  <div className="flex w-4 shrink-0 items-center justify-end pr-1">
    <svg className="h-[17px] w-[5px]" viewBox="0 0 5 17">
      {[0, 3, 6, 9, 12, 15].map((y) => (
        <g key={y} fill="#b4b4b4"><rect x="0" y={y} width="1" height="1" /><rect x="3" y={y} width="1" height="1" /></g>
      ))}
    </svg>
  </div>
);
const Down = ({ className = "", fill = "#555" }) => (
  <svg viewBox="0 0 8 4" className={"h-1 w-2 shrink-0 " + className}><path d="M0 0h8L4 4z" fill={fill} /></svg>
);
const Arrow = ({ pale }) => (
  <div className="flex w-3 shrink-0 items-center justify-center"><Down fill={pale ? "#a8a8a8" : "#555"} /></div>
);
const Sep = () => <div className="flex w-[7px] shrink-0 items-center justify-center"><div className="h-5 w-px bg-[#d0d0d0]" /></div>;
const Btn = ({ n, frame }) => (
  <div className="flex w-[33px] shrink-0 items-center justify-center">
    <div className={"flex h-[31px] w-[31px] items-center justify-center " + (frame === "white" ? "rounded-[3px] border border-[#adadad] bg-[#fdfdfd]" : frame === "down" ? "rounded-[3px] border border-[#adadad] bg-[#dcdcdc]" : "")}>
      {icons[n]}
    </div>
  </div>
);
const Row = ({ items }) =>
  items.split(" ").map((k, i) => {
    if (k === "|") return <Sep key={i} />;
    if (k === "::") return <Grip key={i} />;
    if (k === "v") return <Arrow key={i} />;
    if (k === "vp") return <Arrow key={i} pale />;
    const [n, f] = k.split("/");
    return <Btn key={i} n={n} frame={f} />;
  });
const Bar = ({ items, children, className }) => (
  <div className={"flex shrink-0 border-b border-[#b0b0b0] bg-linear-to-b from-[#fafafa] to-[#eeeeee] " + className}>
    <Row items={items} />
    {children}
  </div>
);

const Check = ({ on = true }) => (
  <div className="flex h-[14px] w-[14px] shrink-0 items-center justify-center border border-[#b9b9b9] bg-white">
    {on && <svg viewBox="0 0 10 10" className="h-[10px] w-[10px]"><path d="M1.500 5L4 8.500 8.500 1" fill="none" stroke="#000" strokeWidth="1.700" /></svg>}
  </div>
);
const DockBtns = () => (
  <div className="flex gap-[3px]">
    <svg viewBox="0 0 11 11" className="h-[11px] w-[11px]" fill="none" stroke="#777"><rect x=".5" y=".5" width="10" height="10" rx="2" /><path d="M4.500 4V2.500h4v4H7M2.500 4.500h4v4h-4z" /></svg>
    <svg viewBox="0 0 11 11" className="h-[11px] w-[11px]" fill="none"><rect x=".5" y=".5" width="10" height="10" rx="2" stroke="#777" /><path d="M3 3l5 5M8 3l-5 5" stroke="#444" strokeWidth="1.700" /></svg>
  </div>
);
const button = "flex shrink-0 items-center justify-center rounded-[3px] border border-[#b0b0b0] bg-linear-to-b from-white to-[#f0f0f0]";

/* ---------- header ---------- */
const menus = [
  ["Pro", "j", "ect", "w-[51px]"], ["", "E", "dit", "w-[34px]"], ["", "V", "iew", "w-[39px]"], ["", "L", "ayer", "w-[42px]"],
  ["", "S", "ettings", "w-[56px]"], ["", "P", "lugins", "w-[53px]"], ["Vect", "o", "r", "w-[47px]"], ["", "R", "aster", "w-[46px]"],
  ["", "D", "atabase", "w-[62px]"], ["", "W", "eb", "w-[38px]"], ["", "M", "esh", "w-[43px]"], ["Pro", "c", "essing", "w-[71px]"], ["", "H", "elp", "w-[40px]"],
];
const Header = () => (
  <>
    <div className="flex h-[23px] shrink-0 items-center bg-white pl-[2px]">
      <svg viewBox="0 0 16 16" className="h-4 w-4" fill="none"><circle cx="7.500" cy="7.500" r="5.800" stroke="#6fa52c" strokeWidth="3.200" /><path d="M8 8l6.500 7" stroke="#4d8a1e" strokeWidth="3" /><path d="M6.500 6.500l3 .5-.5 2-2 0z" fill="#ee7913" stroke="#ee7913" /></svg>
      <span className="ml-[5px] text-[12px] tracking-[-0.35px]">*Untitled Project — QGIS</span>
      <div className="ml-auto flex items-center gap-9 pr-5">
        <svg viewBox="0 0 10 10" className="h-[10px] w-[10px]"><path d="M0 5.500h10" stroke="#000" /></svg>
        <svg viewBox="0 0 10 10" className="h-[10px] w-[10px]" fill="none" stroke="#000"><path d="M.5 2.500h7v7h-7zM2.500 2V.5h7v7H8" /></svg>
        <svg viewBox="0 0 10 10" className="h-[10px] w-[10px]" stroke="#000"><path d="M0 0l10 10M10 0L0 10" /></svg>
      </div>
    </div>
    <div className="flex h-5 shrink-0 items-center border-b border-[#d5d5d5] bg-[#f0f0f0] pl-[10px] text-[12px] tracking-[-0.25px]">
      {menus.map(([a, u, b, w]) => (
        <div key={a + u + b} className={"shrink-0 whitespace-nowrap " + w}>{a}<span className="underline underline-offset-2">{u}</span>{b}</div>
      ))}
    </div>
  </>
);

/* ---------- layers panel ---------- */
const RasterIcon = () => (
  <svg viewBox="0 0 13 13" className="h-[13px] w-[13px] shrink-0"><rect width="13" height="13" fill="#b5cbe6" /><path d="M0 0h4v4H0zM9 0h4v4H9zM4 4h5v5H4zM0 9h4v4H0z" fill="#2b3e55" /><path d="M4 0h5v4H4zM9 9h4v4H9z" fill="#dbe6f3" /><path d="M4 9h5v4H4z" fill="#7ba0cc" /></svg>
);
const Mem = () => (
  <div className="ml-auto mr-[4px] flex h-[17px] w-[17px] items-center justify-center rounded-sm border border-[#d0d0d0] bg-[#f8f8f8]">
    <svg viewBox="0 0 13 11" className="h-[11px] w-[13px] shrink-0" fill="none"><path d="M2.500 0v11M4.500 0v11M6.500 0v11M8.500 0v11M10.500 0v11" stroke="#888" /><rect x=".5" y="2.500" width="12" height="6" rx="1" fill="#fff" stroke="#777" /></svg>
  </div>
);
const LayerRow = ({ name, on = true, open, current, text }) => (
  <div className={"flex h-[18px] shrink-0 items-center " + (current ? "bg-[#efefef]" : "")}>
    <div className="flex w-[43px] shrink-0 items-center justify-end pr-[9px]">{open && <Down />}</div>
    <Check on={on} />
    <div className="flex w-[29px] shrink-0 items-center justify-center">
      {current ? <svg viewBox="0 0 24 20" className="h-[13px] w-4"><Poly fill="#a5c4e4" stroke="#6a8fb8" /></svg> : <RasterIcon />}
    </div>
    <span className={"-ml-px whitespace-nowrap font-bold " + text}>{name}</span>
    {open && <Mem />}
  </div>
);
const Layers = () => (
  <div className="flex w-[398px] shrink-0 flex-col pt-px">
    <div className="flex h-[20px] items-center justify-between pl-1 pr-[1px]"><span>Layers</span><DockBtns /></div>
    <div className="flex h-[29px] items-center pl-[4px]">
      <div className="flex h-[23px] w-[24px] items-center justify-center rounded-[3px] border border-[#b0b0b0] bg-[#dedede]">
        <I className="h-4 w-4"><path d="M1 9l8-1 6 9-4 4-6-2z" fill="#e0561e" /><path d="M3 7l8-2 2 9z" fill="#f6c52c" /><path d="M8 12l5 8 4-4-5-7z" fill="#b05a6a" /><path d="M12 12L23 2" stroke="#e0892c" strokeWidth="4" /></I>
      </div>
      <I className="ml-1 h-[18px] w-[18px]"><path d="M2.500 8v14h12M6 5v13h12V5" stroke="#888" strokeWidth="1.500" /><path d="M10 15V3.500q0-2 2-2t2 2V13" stroke="#3c618c" strokeWidth="1.500" /><path d="M18 3v11M12 5v12" stroke="#888" strokeWidth="1.300" /><Plus /></I>
      <I className="ml-[8px] h-[18px] w-[18px]"><path d="M1 10c5-8 16-8 21 0-5 7-16 7-21 0z" fill="#eef3f8" stroke="#777" strokeWidth="1.300" /><circle cx="11.500" cy="9.500" r="4.500" fill="#5b83a8" /><circle cx="11.500" cy="9.500" r="1.800" fill="#111" /><path d="M16 19h8l-4 4z" fill="#666" /></I>
      <I className="ml-[6px] h-[18px] w-[18px]"><path d="M3 6l7 8v9l5-3v-6l7-8z" fill="#6d97c4" stroke="#41618a" /><path d="M2 2h21v4H2z" fill="#fce94f" stroke="#c4a000" /></I>
      <I className="ml-[9px] h-[18px] w-[18px]"><path d="M12 3.500C8 .5 2 2 3 5.500c.5 2 3 2.500 6 2.500-4 0-7 1-7 4 0 4.500 7 4.500 10 1.500" stroke="#7a3f6a" strokeWidth="2" /><path d="M11 12h12v6c0 1-1 1-2 0v-3h-2v8h-4v-7h-2v3c-1 1-2 1-2 0z" fill="#ddd" stroke="#888" /></I>
      <div className="ml-px flex"><Arrow /></div>
      <I className="ml-[4px] h-[18px] w-[18px]"><path d="M3 3v16M3 4h5M3 11h5M3 18h5" stroke="#888" /><path d="M5 8h6v6H5zM5 16h6v6H5z" fill="#f0a020" /><path d="M13 2h5v10h4l-6.500 8L9 12h4z" fill="#5b87bd" stroke="#3c618c" /></I>
      <I className="ml-[7px] h-[18px] w-[18px]"><path d="M3 3v16M3 4h5M3 11h5M3 18h5" stroke="#888" /><path d="M5 8h6v6H5zM5 16h6v6H5z" fill="#f0a020" /><path d="M13 21h5V11h4l-6.500-8L9 11h4z" fill="#5b87bd" stroke="#3c618c" /></I>
      <I className="ml-[6px] h-[18px] w-[18px]"><path d="M3 2.500h16v16H3z" fill="#f8f8f8" stroke="#888" strokeWidth="1.500" /><rect x="13" y="14" width="11" height="9" rx="2" fill="#e05050" /><path d="M15.500 18.500h6" stroke="#fff" strokeWidth="2" /></I>
    </div>
    <div className="flex h-[192px] border border-[#b4b4b4] bg-white">
      <div className="flex grow flex-col overflow-hidden">
        <div className="flex h-[8px] shrink-0 items-end overflow-hidden pl-[23px]">
          <div className="mb-[4px]"><Check /></div><div className="mb-[4px] ml-2 h-[13px] w-[11px] border border-[#888]" /><span className="mb-[1px] ml-[10px] leading-4 tracking-[-0.3px]">Clipped</span>
        </div>
        {["2016", "2017", "2018"].map((y) => (
          <LayerRow key={y} on={false} name={"clipped_reprojected_LandCover_" + y} text="italic text-[#7a7a7a] tracking-[0.2px]" />
        ))}
        <LayerRow name="clipped_reprojected_HRSL_Ashanti_Population" open text="tracking-[-0.18px]" />
        {[["2.3699", "bg-[#440154]"], ["6.2421", "bg-[#31688e]"], ["10.4455", "bg-[#35b779]"], ["25.2859", "bg-[#fde725]"]].map(([t, c]) => (
          <div key={t} className="flex h-[18px] shrink-0 items-center pl-[63px]"><div className={"h-4 w-4 " + c} /><span className="ml-[6px] tracking-[-0.3px]">{t}</span></div>
        ))}
        <LayerRow name="Dissolved" open current text="underline underline-offset-2 tracking-[-0.2px]" />
        <div className="flex h-5 shrink-0 items-center pl-[63px]"><Check /><div className="ml-[6px] h-[18px] w-[18px] border border-[#8a6512] bg-[#ffba22]" /><span className="ml-[6px] tracking-[-0.3px]">Shrubs</span></div>
        <div className="flex h-5 shrink-0 pl-[83px]"><div className="h-[18px] w-[18px] border border-[#8a8a2a] bg-[#ffff4c]" /></div>
      </div>
      <div className="w-[13px] border-l border-[#b4b4b4] bg-[#fafafa]">
        <div className="flex h-[13px] items-center justify-center"><svg viewBox="0 0 8 4" className="h-1 w-2"><path d="M0 4h8L4 0z" fill="#555" /></svg></div>
        <div className="h-[82px] border-y border-[#b4b4b4] bg-[#e6e6e6]" />
      </div>
    </div>
  </div>
);

/* ---------- map canvas ---------- */
const O = "#ffba22", Y = "#ffff4c", P = "#f096ff", R = "#ff0000", K = "#dcde7a", G = "#84dc30", B = "#0a32e6";
const zones = [
  [R, "455,158 607.500,158 607.500,214.700 583.500,214.700 583.500,166.300 527.700,166.300 527.700,214.700 559.500,214.700 559.500,273 503.700,273 503.700,248.600 455,248.600"],
  [O, "559.500,214.700 607.500,214.700 607.500,248.600 642,248.600 642,273 583.500,273 583.500,297.500 559.500,297.500"],
  [K, "875,158 899,158 899,190.500 923.500,190.500 923.500,166.300 957.500,166.300 957.500,248.600 923.500,248.600 923.500,214.700 875,214.700"],
  [B, "981.500,190.500 1015,190.500 1015,248.600 1006,248.600 1006,214.700 981.500,214.700"],
  [O, "843,353 899,353 899,377.500 875,377.500 875,401.700 843,401.700"],
  [P, "794.600,401.700 819,401.700 819,450.400 746,450.400 746,426 794.600,426"],
  [R, "721.700,426 746,426 746,481.500 770.700,481.500 770.700,612.600 819,612.600 819,661.500 874.700,661.500 874.700,705 690.700,705 690.700,612.600 680,612.600 680,450.400 721.700,450.400"],
  [K, "957.300,426 981.700,426 981.700,481.500 1005.700,481.500 1005.700,506.400 981.700,506.400 981.700,564.400 957.300,564.400 957.300,530.500 923.300,530.500 923.300,506.400 957.300,506.400"],
  [P, "874.700,644.600 923.300,644.600 923.300,661.500 898.500,661.500 898.500,705 874.700,705"],
];
const boxes = [
  [Y, 527.7, 166.3, 559.5, 190.5], [P, 527.7, 190.5, 559.5, 214.7], [O, 607.5, 190.5, 642, 214.7], [O, 503.7, 273, 527.7, 297.5],
  [O, 527.7, 297.5, 559.5, 329], [O, 503.7, 329, 527.7, 353], [O, 583.5, 329, 607.5, 353], [O, 666, 248.6, 690.5, 273],
  [O, 666, 377.5, 690.5, 404], [Y, 721.7, 353, 746, 377.5], [O, 794.6, 190.5, 819, 214.7], [K, 794.6, 248.6, 819, 273],
  [G, 899, 214.7, 923.5, 248.6], [K, 957.5, 248.6, 981.7, 273], [G, 843.3, 273, 874.8, 297.5], [K, 981.5, 329, 1005.8, 353],
  [P, 819, 377.5, 843.3, 401.7], [P, 680, 426, 721.7, 450.4], [Y, 794.6, 450.4, 819, 481.5], [K, 899, 402, 923.3, 426],
  [K, 874.7, 426, 899, 450.4], [P, 819, 506.4, 843.3, 530.5], [O, 746, 564.4, 770.7, 588.7], [O, 794.7, 564.4, 819, 588.7],
  [P, 819, 564.4, 843.3, 588.7], [O, 843.3, 564.4, 874.7, 612.6], [P, 794.7, 588.7, 819, 612.6], [O, 923.3, 685.5, 957.3, 705],
  [Y, 680, 613, 690.7, 661.5], [P, 680, 661.5, 690.7, 685.5],
];
/* Population cells, three units per pixel: "top-bottom: left-right ..." for each tile. */
const tiles = [
  [455, 158, `9-30:33-57 81-105 180-204 348-375 423-495;30-54:57-105 180-228;54-81:33-105 180-228;81-105:9-105 423-495 519-543;105-129:33-57 153-180 300-324 399-471 495-519;129-153:9-33 57-105 153-204 300-324 447-495;153-177:9-81 130-228 495-519;177-201:9-105 130-228 423-519;201-225:33-57 81-105 130-180 228-252 471-519;225-249:33-105 180-228 471-519;249-275:57-105 153-276;275-299:153-252;299-323:204-252;323-347:204-300;371-395:276-300;443-467:471-495;615-689:300-324;639-663:348-399 666-690;663-713:375-399;713-740:324-375 495-543 618-666;663-689:594-714;689-713:666-690;591-615:714-762;615-639:762-837;639-663:789-813;663-689:762-813;689-713:738-789`],
  [730, 158, `519-543:351-402;591-615:426-474`],
  [685, 400, `12-108:0-24;12-36:48-72;36-60:24-48;159-183:243-267 0-24 99-171;255-279:366-390 0-72 99-171 195-219;183-207:0-24 72-123 147-171;207-231:99-123 171-195;231-255:48-147;279-303:0-24 48-72 99-219;303-327:0-72 99-267;327-353:24-72 99-147 171-195 243-267 486-585;353-378:0-24 48-72 123-243 414-438;378-402:0-48 147-219 414-486 513-585;402-426:0-72 123-171 195-219 513-537;426-450:0-48 99-219 537-585`],
  [685, 548, `6-30:0-24 171-243 585-609;30-54:0-72 99-195 609-633;54-78:24-99 123-147;78-102:24-72 147-195;102-129:72-123 147-195;129-153:48-123;153-177:72-147 171-294 390-414;177-201:72-123 147-219 267-318;201-225:0-24 99-147 171-195 243-318 342-438;225-249:99-123 195-243 366-390 438-462;249-273:72-147 195-219 342-537 561-585;273-297:123-147 195-219 390-561 585-633;297-323:147-195 219-243 318-366 414-438 462-657;323-347:147-195 294-318 342-390 414-486 513-537 561-633;347-371:147-195 267-342 390-486 537-585;371-395:72-99 147-195 318-366 390-438 462-486 537-561;395-419:72-99 171-219 342-366 462-486 513-561 657-681;419-443:72-123 195-243 294-318 342-366;443-460:219-267`],
];
const cellPath = (ox, oy, src) =>
  src.split(";").map((line) => {
    const [ys, xs] = line.split(":");
    const [t, b] = ys.split("-").map(Number);
    return xs.split(" ").map((r) => {
      const [l, e] = r.split("-").map(Number);
      return `M${ox + l / 3} ${oy + t / 3}H${ox + e / 3}V${oy + b / 3}H${ox + l / 3}z`;
    }).join("");
  }).join("");
const MapCanvas = () => (
  <div className="ml-[7px] mt-px h-[540px] w-[555px] shrink-0 border border-[#b4b4b4]">
    <svg viewBox="458 161 553 538" className="block h-[538px] w-[553px]">
      <rect x="458" y="161" width="553" height="538" fill="#648c00" />
      <g stroke="#26261c" strokeWidth="1.200">
        {zones.map(([f, p], i) => <polygon key={i} points={p} fill={f} />)}
        {boxes.map(([f, a, b, c, d], i) => <rect key={i} x={a} y={b} width={c - a} height={d - b} fill={f} />)}
      </g>
      <g fill="#355c89" shapeRendering="crispEdges">
        {tiles.map(([x, y, s]) => <path key={x + y} d={cellPath(x, y, s)} />)}
      </g>
    </svg>
  </div>
);

/* ---------- styling panel ---------- */
const classes = [
  ["20", "Shrubs", "bg-[#ffba22]"], ["30", "Herbaceous vegetation", "bg-[#ffff4c]"], ["40", "Agriculture", "bg-[#f096ff]"],
  ["50", "Urban / Builtup", "bg-[#fa0000]"], ["80", "Permanent water bodies", "bg-[#0032c8]"], ["90", "Herbaceous wetland", "bg-[#0096a0]"],
  ["112", "Closed forest, evergreen leaf", "bg-[#0a32e6]"], ["114", "Close forest, deciduos leaf", "bg-[#00cc00]"], ["116", "Closed forest", "bg-[#dcde7a]"],
  ["122", "Open forest, evergreen broadleaf", "bg-[#84dc30]"], ["124", "Open forest, deciduous broadleaf", "bg-[#a0dc00]"], ["126", "Open forest", "bg-[#648c00]"],
];
const Styling = () => (
  <div className="flex w-[345px] shrink-0 flex-col pt-px">
    <div className="flex h-[20px] items-center justify-between pl-px pr-[2px]"><span className="tracking-[-0.3px]">Layer Styling</span><DockBtns /></div>
    <div className={button + " mt-[3px] h-[23px] w-[342px] !justify-start pl-[5px] pr-[7px]"}>
      <svg viewBox="0 0 24 20" className="h-[13px] w-4"><Poly fill="#e0e0e0" stroke="#999" /></svg>
      <span className="ml-[2px] tracking-[-0.6px]">Dissolved</span>
      <Down className="ml-auto" />
    </div>
    <div className="flex h-[491px]">
      <div className="flex w-[38px] shrink-0 flex-col">
        <div className="flex h-[38px] items-center pl-[6px] pt-[6px]">
          <I><path d="M2 9c4-3 8-2 12 1l2 6-6 6-9-4z" fill="#7cc06c" /><path d="M1 16l5-5 6 8-3 3z" fill="#d8486a" /><path d="M6 12l6-2 3 5-4 4z" fill="#4a90d0" /><path d="M11 11l7 7-6 5-6-7z" fill="#aab0a8" opacity=".85" /><path d="M14 13L22.500 3" stroke="#8c8c70" strokeWidth="3.200" /></I>
        </div>
        <div className="flex grow flex-col items-start gap-[8px] bg-[#5c5c5c] pl-[3px] pt-[4px]">
          <I><path d="M1.500 12L6.500 6.500h16v11h-16z" fill="#fce94f" stroke="#c4a000" strokeWidth="1.400" /><text x="6" y="15" fontSize="8" fontWeight="700" fontFamily="Open Sans, sans-serif" fill="#555">abc</text></I>
          <I><g fill="#e6ebf8"><circle cx="4" cy="12.500" r="4" /><circle cx="9" cy="10" r="4.500" /><circle cx="15" cy="11" r="4.500" /><circle cx="20" cy="12.500" r="4" /><rect x="3" y="10" width="18" height="6.500" /></g><text x="1.500" y="15.500" fontSize="11" fontWeight="700" fontFamily="Open Sans, sans-serif" fill="#333">abc</text></I>
          <I><path d="M12 2l10 6-10 6L2 8z" fill="#f58a8a" stroke="#c02020" /><path d="M2 8l10 6v9L2 17z" fill="#8ee04a" stroke="#3c8a10" /><path d="M22 8l-10 6v9l10-6z" fill="#fce94f" stroke="#b09000" /></I>
          <I><path d="M8 7v10M17 7v10M4 17v-5h4M20 17v-5h-4" stroke="#d08030" strokeWidth="2" /><rect x="8" y="1" width="9" height="8" fill="#ee6060" stroke="#a82828" /><rect x="1" y="16.500" width="9" height="6" fill="#fce94f" stroke="#c4a000" /><rect x="13" y="16.500" width="10" height="6" fill="#8cb8ea" stroke="#4b7fb8" /></I>
          <I><g transform="translate(0 1) scale(.62)"><Undo c="#6aa880" flip /></g><g transform="translate(8 9) scale(.62)"><Undo c="#e08040" /></g></I>
        </div>
      </div>
      <div className="ml-[3px] flex w-[301px] flex-col overflow-hidden">
        <div className={button + " mt-[7px] h-[24px] w-[340px] !justify-start pl-[7px]"}>
          <svg viewBox="0 0 14 14" className="h-[14px] w-[14px]"><rect x=".5" y=".5" width="10" height="3" rx=".6" fill="#29a8e0" stroke="#0f4f80" /><rect x="3" y="5.500" width="10.500" height="3" rx=".6" fill="#12a050" stroke="#054" /><rect x=".5" y="10.500" width="10" height="3" rx=".6" fill="#c01010" stroke="#600" /></svg>
          <span className="ml-[3px] tracking-[-0.6px]">Categorized</span>
        </div>
        <div className="mt-[6px] flex h-6 shrink-0 items-center">
          <span className="w-[58px] shrink-0 tracking-[-0.5px]">Value</span>
          <div className="flex h-6 w-[232px] shrink-0 items-center rounded-[3px] border border-[#b0b0b0] bg-white pl-[3px]">
            <span className="text-[10px] font-bold text-[#555]">123</span><span className="ml-[2px] tracking-[-0.4px]">DN</span>
            <div className="ml-auto flex h-full w-5 items-center justify-center border-l border-[#b0b0b0] bg-[#fafafa]"><Arrow /></div>
          </div>
          <div className={button + " ml-[6px] h-6 w-6"} />
        </div>
        <div className="mt-[5px] flex h-[27px] shrink-0 items-center">
          <span className="w-[58px] shrink-0 tracking-[-0.6px]">Symbol</span>
          <div className={button + " h-[27px] w-[280px] !justify-start pl-1"}><div className="h-[21px] w-[270px] border border-[#8a6c20] bg-[#e5b436]" /></div>
        </div>
        <div className="mt-[7px] flex h-[22px] shrink-0 items-center">
          <span className="w-[58px] shrink-0 whitespace-nowrap tracking-[-0.7px]">Color ramp</span>
          <div className={button + " h-[22px] w-[248px] tracking-[-0.75px]"}>Random colors</div>
        </div>
        <div className="mt-[6px] flex h-[266px] w-[340px] shrink-0 flex-col border border-[#b0b0b0] bg-white">
          <div className="flex h-[18px] shrink-0 items-center border-b border-[#cfcfcf] bg-linear-to-b from-white to-[#f0f0f0]">
            <div className="flex h-full w-[66px] items-center justify-between border-r border-[#cfcfcf] pl-[2px] pr-[3px]"><span>Symbol</span><Down /></div>
            <div className="flex h-full w-[55px] items-center border-r border-[#cfcfcf] pl-[2px]">Value</div>
            <div className="pl-[2px]">Legend</div>
          </div>
          {classes.map(([v, l, c]) => (
            <div key={v} className="flex h-[18px] shrink-0 items-center pl-[3px]">
              <div className="pt-px"><Check /></div>
              <div className={"ml-[6px] h-4 w-4 border border-black/40 " + c} />
              <span className="-mt-[2px] ml-[30px] w-[55px] tracking-[-0.15px]">{v}</span>
              <span className="-mt-[2px] whitespace-nowrap tracking-[-0.15px]">{l}</span>
            </div>
          ))}
        </div>
        <div className="mt-[6px] flex h-6 shrink-0 items-center gap-[6px] tracking-[-0.5px]">
          <div className={button + " h-[21px] w-20"}>Classify</div>
          <div className={button + " h-6 w-7"}><svg viewBox="0 0 14 14" className="h-[14px] w-[14px]" fill="#fff" stroke="#3f7a3f"><path d="M4.500 .5h5v4h4v5h-4v4h-5v-4h-4v-5h4z" /><path d="M7 2.500v9M2.500 7h9" strokeWidth="2" /></svg></div>
          <div className={button + " h-6 w-7"}><svg viewBox="0 0 14 6" className="h-[6px] w-[14px]" fill="#fff" stroke="#d33"><path d="M.5.500h13v5H.5zM2.500 3h9" strokeWidth="1.200" /></svg></div>
          <div className={button + " h-[21px] w-20"}>Delete All</div>
          <div className={button + " h-[21px] w-[80px] !justify-start pl-[9px]"}>Advanced</div>
        </div>
        <div className="mt-[5px] flex h-[19px] shrink-0 items-center">
          <svg viewBox="0 0 8 12" className="ml-[5px] h-3 w-2"><path d="M0 0l7.500 6L0 12z" fill="#333" /></svg>
          <span className="ml-[7px] text-[12px] font-bold tracking-[-0.25px]">Layer Rendering</span>
        </div>
        <div className="flex h-[14px] shrink-0 items-center border-t border-[#b4b4b4] bg-[#f8f8f8]">
          <div className="flex w-[13px] justify-center"><svg viewBox="0 0 4 8" className="h-2 w-1"><path d="M4 0v8L0 4z" fill="#444" /></svg></div>
          <div className="h-full grow border-l border-[#b4b4b4]" />
          <div className="h-full w-[18px] border-x border-[#b4b4b4] bg-[#e4e4e4]" />
          <div className="flex w-[13px] justify-center"><svg viewBox="0 0 4 8" className="h-2 w-1"><path d="M0 0v8l4-4z" fill="#444" /></svg></div>
        </div>
        <div className="mt-[5px] flex h-6 shrink-0 items-center">
          <div className={button + " h-[23px] w-6"}><I className="h-[14px] w-[14px]"><Undo c="#e08040" /></I></div>
          <div className={button + " ml-[6px] h-[23px] w-6"}><I className="h-[14px] w-[14px]"><Undo c="#80b890" flip /></I></div>
          <div className="ml-[80px]"><Check /></div>
          <span className="ml-1 w-[69px] whitespace-nowrap tracking-[-0.6px]">Live update</span>
          <div className={button + " h-[21px] w-20 tracking-[-0.3px]"}>Apply</div>
        </div>
      </div>
    </div>
  </div>
);

/* ---------- status bar and search results ---------- */
const Spin = () => (
  <div className="ml-auto flex h-full w-[11px] flex-col items-center justify-center gap-[3px] border-l border-[#c8c8c8]">
    <svg viewBox="0 0 6 4" className="h-1 w-[6px]"><path d="M0 4h6L3 0z" fill="#555" /></svg>
    <svg viewBox="0 0 6 4" className="h-1 w-[6px]"><path d="M0 0h6L3 4z" fill="#555" /></svg>
  </div>
);
const field = "flex h-[21px] shrink-0 items-center rounded-[3px] border border-[#b0b0b0] bg-white";
const Status = () => (
  <div className="flex h-[25px] shrink-0 items-start whitespace-nowrap bg-[#f0f0f0] pl-1">
    <div className="flex h-[22px] w-[200px] shrink-0 items-center rounded-[3px] border border-[#4ba6e8] bg-white pl-2">
      <svg viewBox="0 0 13 13" className="h-[13px] w-[13px]" fill="none" stroke="#999"><circle cx="5" cy="5" r="4" strokeWidth="1.200" /><path d="M8 8l4.500 4.500" strokeWidth="1.600" /></svg>
      <span className="ml-[6px] tracking-[-0.5px]">raster pixels</span><div className="h-[13px] w-px bg-black" />
      <svg viewBox="0 0 13 10" className="ml-auto mr-[7px] h-[10px] w-[13px]"><path d="M4 0h9v10H4L0 5z" fill="#8c8c8c" /><path d="M5.500 2.500l5 5M10.500 2.500l-5 5" stroke="#fff" strokeWidth="1.200" /></svg>
    </div>
    <div className="flex h-[23px] grow items-center">
      <span className="ml-[7px] w-[356px] shrink-0 tracking-[-0.44px]">Toggles the editing state of the current layer</span>
      <span className="w-[57px] shrink-0 tracking-[-0.6px]">Coordinate</span>
      <div className={field + " w-[97px] justify-center tracking-[-0.15px]"}>653666,828467</div>
      <svg viewBox="0 0 16 16" className="ml-[4px] h-4 w-4 shrink-0" fill="none" stroke="#222"><path d="M9 5c3-3 6 0 3 3l-4 6c-2 2-6 0-4-3z" fill="#ddd" /><path d="M1 1l7 6M5 1l4 4M1 5l5 4M11 1l-2 4M5 10l4 3" strokeWidth="1.400" /></svg>
      <span className="ml-[12px] w-[29px] shrink-0 tracking-[-0.4px]">Scale</span>
      <div className={field + " w-[81px] pl-[2px]"}><span className="tracking-[-0.4px]">367334144</span><div className="ml-auto flex h-full w-5 items-center justify-center border-l border-[#c8c8c8] bg-[#f8f8f8]"><Arrow /></div></div>
      <svg viewBox="0 0 12 15" className="ml-[12px] h-[15px] w-3 shrink-0"><path d="M2.500 7V4a3.500 3.500 0 0 1 7 0v3" fill="none" stroke="#888" strokeWidth="1.600" /><rect y="6.500" width="12" height="8.500" rx="1" fill="#666" /></svg>
      <span className="ml-[8px] w-[48px] shrink-0 tracking-[-0.7px]">Magnifier</span>
      <div className={field + " w-[88px] pl-[4px] tracking-[-0.4px]"}>100%<Spin /></div>
      <span className="ml-[8px] w-[51px] shrink-0 tracking-[-0.4px]">Rotation</span>
      <div className={field + " w-[84px] pl-[4px]"}>0.0 °<Spin /></div>
      <div className="ml-[6px]"><Check /></div>
      <span className="ml-1 w-[53px] shrink-0 tracking-[-0.3px]">Render</span>
      <svg viewBox="0 0 15 15" className="h-[15px] w-[15px] shrink-0" fill="none" stroke="#777"><circle cx="7.500" cy="6.500" r="5.800" fill="#999" /><ellipse cx="7.500" cy="6.500" rx="2.500" ry="5.800" stroke="#eee" /><path d="M1.500 6.500h12M2.500 3.500h10M2.500 9.500h10" stroke="#eee" /><path d="M4 14h7M7.500 12v2" /></svg>
      <span className="ml-[3px] w-[73px] shrink-0 tracking-[-0.3px]">EPSG:2136</span>
      <svg viewBox="0 0 16 16" className="h-4 w-4 shrink-0"><ellipse cx="8" cy="7" rx="8" ry="6.500" fill="#666" /><path d="M8 12h5v4z" fill="#666" /><g fill="#fff"><circle cx="4.500" cy="7" r="1.100" /><circle cx="8" cy="7" r="1.100" /><circle cx="11.500" cy="7" r="1.100" /></g></svg>
    </div>
  </div>
);
const Results = () => (
  <div className="absolute left-1 top-[401px] flex h-[302px] w-[683px] flex-col border border-[#b4b4b4] bg-white">
    <div className="flex h-[15px] items-center pl-[3px] tracking-[-0.1px] text-[#7f7f7f]">Processing Algorithms</div>
    {["Raster pixels to points", "Raster pixels to polygons"].map((t, i) => (
      <div key={t} className={"flex h-[15px] items-center pl-[3px] " + (i ? "" : "bg-[#f0f0f0]")}>
        <I className="h-4 w-4">{i ? <Gear fill="#a9c0dc" stroke="#7a9cc4" /> : <Gear />}</I><span className="ml-[6px] tracking-[-0.2px]">{t}</span>
      </div>
    ))}
  </div>
);

export default function App() {
  return (
    <div className="relative flex h-[728px] w-[1366px] flex-col overflow-hidden bg-[#f0f0f0] font-['Open_Sans','Noto_Sans',sans-serif] text-[11.5px] leading-none text-black">
      <Header />
      <Bar className="h-[39px] pl-[12px]" items="newp/white open save layout mgr style :: hand panmap zin/down zout zfull zsel zlay z11 zprev znext map2 map3 bmk bmks clock refresh :: ident table abacus gear sigma ruler v tip action vp textn v" />
      <Bar className="h-[39px] pl-[12px]" items="dsm geopkg vnew quill/white chip | virt | :: pen2 pen psave padd vert v multi trash cut copy paste undo redo :: abcY diag | abcB abcR | g1 g2 g3 g4 g5 :: db :: hex gl1 gl2 gl3 :: help :: topo sheet" />
      <Bar className="h-[38px] pl-[12px]" items="sel1 v sel2 v sel3 v sel4 :: find">
        <div className={button + " my-auto ml-[1px] h-[22px] w-[87px] !justify-start pl-[3px] pr-[5px] tracking-[-0.9px]"}>Ghana<Down className="ml-auto" /></div>
        <div className={field + " my-auto ml-[2px] w-[108px] pl-[2px] tracking-[-0.5px] text-[#777]"}>Search for…</div>
        <Row items=":: plot :: greenS osm :: py fire folder swipe leaf earth gpoly gi :: route ::" />
      </Bar>
      <div className="flex h-[544px] shrink-0">
        <div className="flex w-[52px] shrink-0 flex-col bg-linear-to-r from-[#fafafa] to-[#efefef] pl-2">
          <svg viewBox="0 0 17 5" className="ml-[11px] mt-[7px] h-[5px] w-[17px] shrink-0">
            {[0, 3, 6, 9, 12, 15].map((x) => <g key={x} fill="#b4b4b4"><rect x={x} y="0" width="1" height="1" /><rect x={x} y="3" width="1" height="1" /></g>)}
          </svg>
          <div className="mt-1 flex flex-col gap-[8.200px]">
            {["lvec", "lraster", "lmesh", "lcomma", "lquill", "lvirt"].map((n) => <React.Fragment key={n}>{icons[n]}</React.Fragment>)}
            <div className="flex items-center">{icons.pg}<div className="ml-1 flex"><Arrow /></div></div>
            {icons.pg}
          </div>
        </div>
        <Layers />
        <MapCanvas />
        <div className="flex w-[9px] shrink-0 items-center justify-center">
          <svg viewBox="0 0 4 17" className="h-[17px] w-1">{[0, 3, 6, 9, 12, 15].map((y) => <rect key={y} x="1" y={y} width="1" height="1" fill="#aaa" />)}</svg>
        </div>
        <Styling />
      </div>
      <Status />
      <Results />
    </div>
  );
}
